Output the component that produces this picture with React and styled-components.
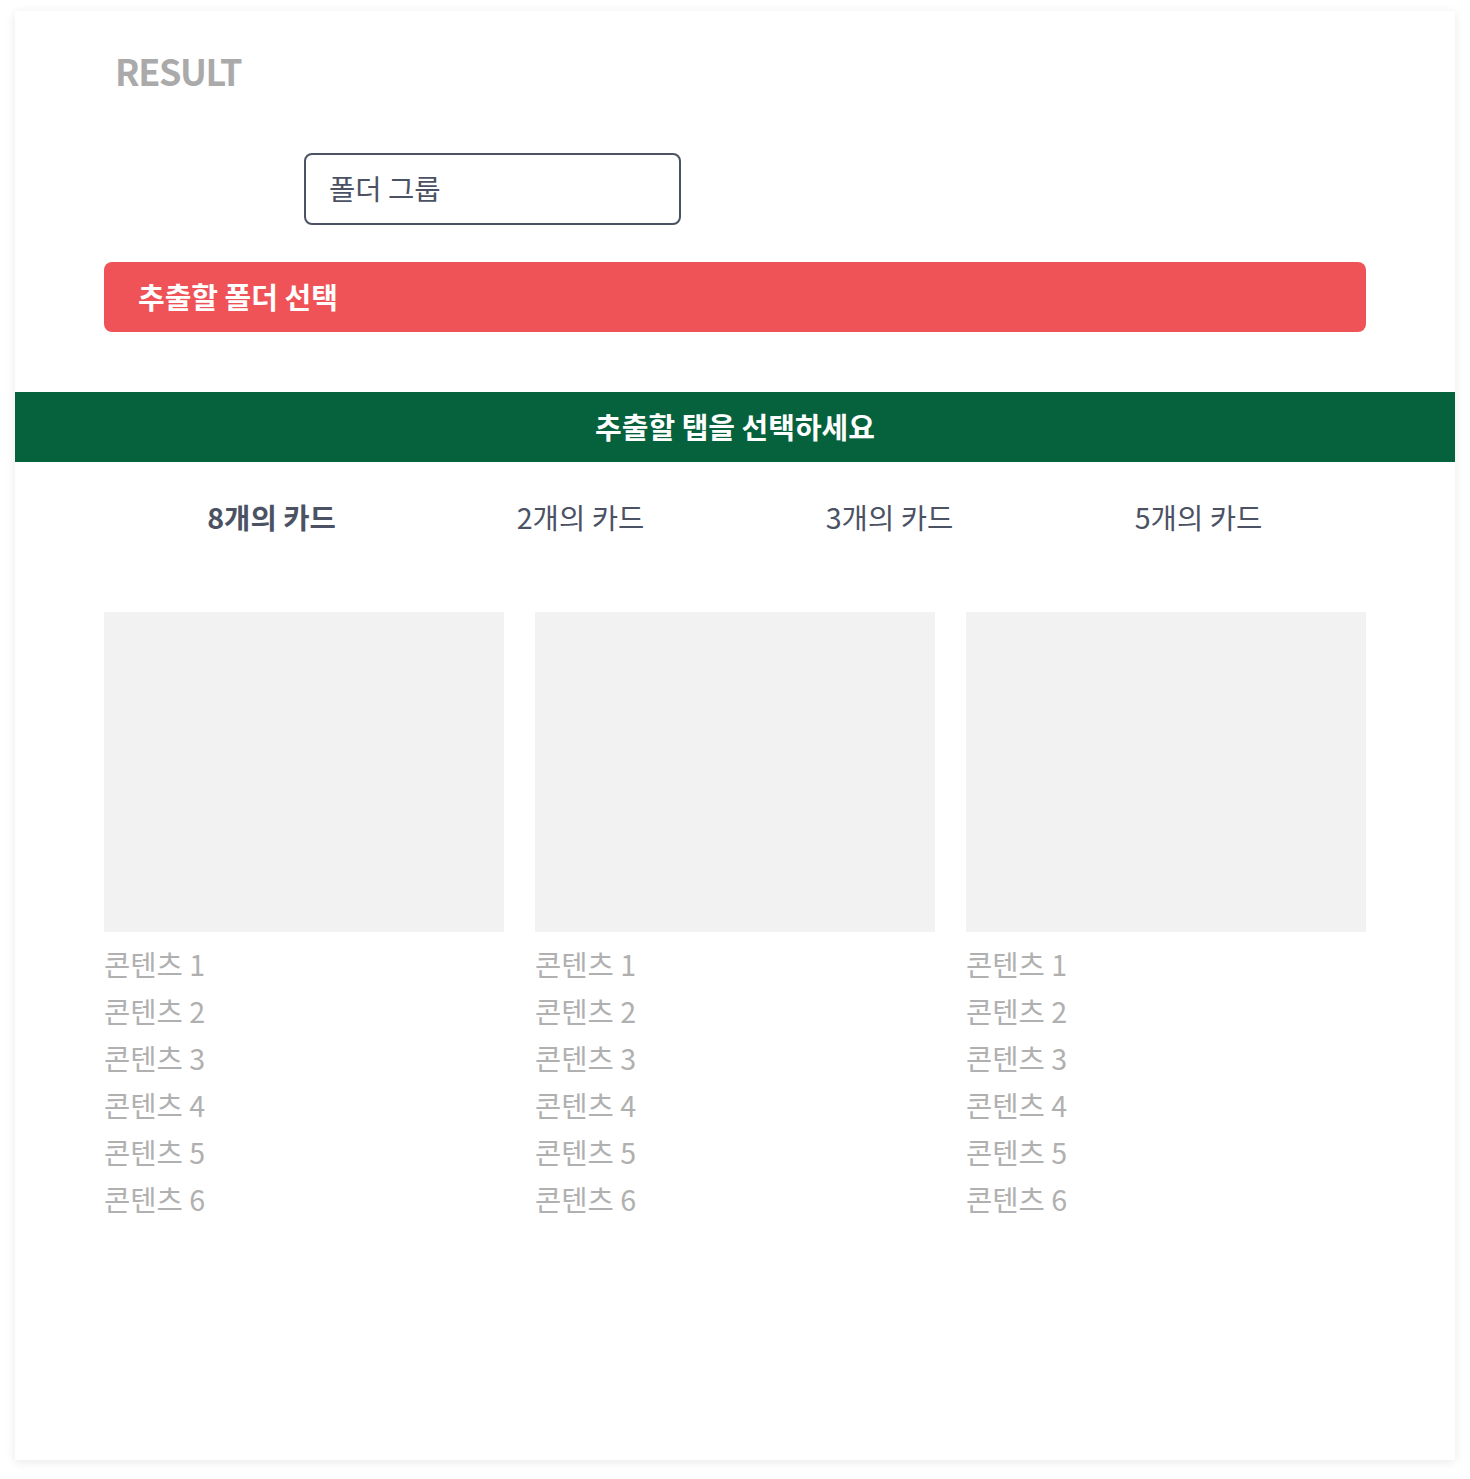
import React, { useState } from "react";
import styled, { createGlobalStyle } from "styled-components";

const Global = createGlobalStyle`
  * { box-sizing: border-box; }
  html, body { margin: 0; padding: 0; background: #ffffff; }
  body { font-family: "Noto Sans CJK KR", "Noto Sans", sans-serif; }
`;

const Page = styled.div`
  padding: 11px 15px 19px 15px;
`;

const Card = styled.section`
  width: 1440px;
  min-height: 1449px;
  background: #ffffff;
  box-shadow: 0 2px 10px rgba(0, 0, 0, 0.09);
  display: flex;
  flex-direction: column;
`;

const Top = styled.div`
  padding: 33px 89px 0 89px;
  display: flex;
  flex-direction: column;
`;

const Title = styled.h1`
  margin: 0 0 0 11px;
  font-size: 36px;
  line-height: 52px;
  font-weight: 700;
  letter-spacing: -1.4px;
  color: #aaaaaa;
`;

const FormRow = styled.div`
  margin-top: 57px;
  display: flex;
  align-items: center;
`;

const Label = styled.label`
  width: 200px;
  flex: none;
`;

const Input = styled.input`
  width: 377px;
  height: 72px;
  border: 2px solid #4b5263;
  border-radius: 8px;
  padding: 0 0 4px 23px;
  font-family: inherit;
  font-size: 28.6px;
  color: #4b5263;
  outline: none;
  &::placeholder { color: #4b5263; }
`;

const PrimaryButton = styled.button`
  margin-top: 37px;
  height: 70px;
  border: none;
  border-radius: 8px;
  background: #ef5357;
  color: #ffffff;
  font-family: inherit;
  font-size: 29px;
  font-weight: 700;
  text-align: left;
  padding: 0 0 2px 34px;
  cursor: pointer;
`;

const Banner = styled.div`
  margin-top: 60px;
  height: 70px;
  background: #05623d;
  color: #ffffff;
  font-size: 29px;
  font-weight: 700;
  display: flex;
  align-items: center;
  justify-content: center;
  padding-bottom: 2px;
`;

const Tabs = styled.div`
  width: 1236px;
  margin: 29px auto 0;
  display: grid;
  grid-template-columns: repeat(4, 1fr);
`;

const Tab = styled.button`
  height: 50px;
  border: none;
  background: transparent;
  font-family: inherit;
  font-size: 28.6px;
  font-weight: ${(p) => (p.$active ? 700 : 400)};
  color: #4b5263;
  cursor: pointer;
  padding: 0;
`;

const Grid = styled.div`
  margin: 71px 89px 0;
  display: grid;
  grid-template-columns: repeat(3, 400px);
  column-gap: 31px;
`;

const Item = styled.article`
  display: flex;
  flex-direction: column;
`;

const Thumb = styled.div`
  height: 320px;
  background: #f2f2f2;
`;

const List = styled.ul`
  list-style: none;
  margin: 0;
  padding: 8px 0 0 0;
`;

const ListItem = styled.li`
  font-size: 28.6px;
  line-height: 47px;
  color: #b0b0b0;
`;

const tabs = ["8개의 카드", "2개의 카드", "3개의 카드", "5개의 카드"];
const items = [1, 2, 3, 4, 5, 6];

export default function App() {
  const [active, setActive] = useState(0);
  return (
    <>
      <Global />
      <Page>
        <Card>
          <Top>
            <Title>RESULT</Title>
            <FormRow>
              <Label />
              <Input placeholder="폴더 그룹" />
            </FormRow>
            <PrimaryButton>추출할 폴더 선택</PrimaryButton>
          </Top>
          <Banner>추출할 탭을 선택하세요</Banner>
          <Tabs>
            {tabs.map((t, i) => (
              <Tab key={t} $active={i === active} onClick={() => setActive(i)}>
                {t}
              </Tab>
            ))}
          </Tabs>
          <Grid>
            {[0, 1, 2].map((c) => (
              <Item key={c}>
                <Thumb />
                <List>
                  {items.map((n) => (
                    <ListItem key={n}>콘텐츠 {n}</ListItem>
                  ))}
                </List>
              </Item>
            ))}
          </Grid>
        </Card>
      </Page>
    </>
  );
}
